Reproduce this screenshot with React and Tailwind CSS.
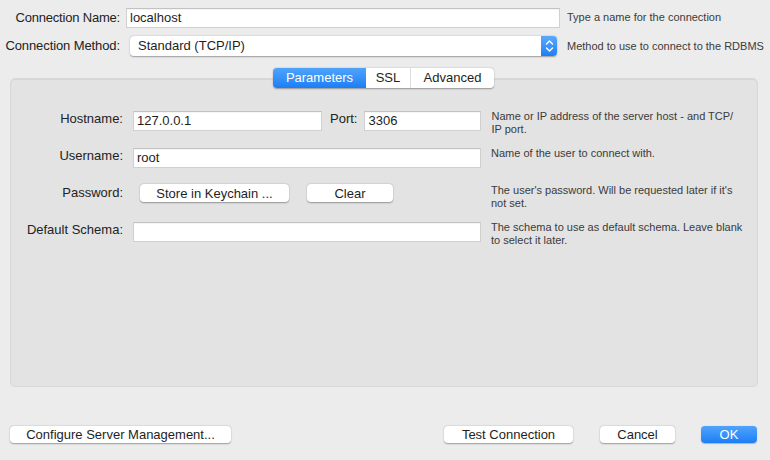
import React from "react";

function Input({ className = "", value = "" }) {
  return (
    <div
      className={
        "h-[20px] bg-white border border-[#d0d0d0] border-t-[#c2c2c2] shadow-[inset_0_1px_0_rgba(0,0,0,0.04)] flex items-center px-[3px] text-[13px] text-[#1e1e1e] " +
        className
      }
    >
      {value}
    </div>
  );
}

function Btn({ className = "", children }) {
  return (
    <div
      className={
        "bg-white rounded-[4px] shadow-[0_0.5px_1.5px_rgba(0,0,0,0.35)] flex items-center justify-center text-[13px] text-[#1e1e1e] leading-none " +
        className
      }
    >
      {children}
    </div>
  );
}

export default function App() {
  return (
    <div className="w-[770px] h-[460px] bg-[#ececec] flex flex-col font-['Liberation_Sans',Arial,sans-serif] text-[#222] overflow-hidden">
      {/* Connection name */}
      <div className="flex items-center h-[19px] mt-[8px]">
        <div className="w-[120px] text-right text-[13px] tracking-[-0.2px]">Connection Name:</div>
        <Input className="ml-[6px] w-[434px] h-[19px]" value="localhost" />
        <div className="ml-[7px] text-[11px] text-[#3b3b3b]">Type a name for the connection</div>
      </div>
      {/* Connection method */}
      <div className="flex items-center h-[20px] mt-[9px]">
        <div className="w-[120px] text-right text-[13px] tracking-[-0.1px]">Connection Method:</div>
        <div className="ml-[10px] w-[427px] h-[20px] bg-white rounded-[4px] shadow-[0_0.5px_1.5px_rgba(0,0,0,0.35)] flex items-center">
          <div className="flex-1 pl-[8px] text-[13px] text-[#1e1e1e]">Standard (TCP/IP)</div>
          <div className="w-[16px] h-[20px] rounded-r-[4px] bg-gradient-to-b from-[#5aa9fb] to-[#1b7ef6] flex items-center justify-center">
            <svg width="9" height="14" viewBox="0 0 9 14" fill="none" stroke="white" strokeWidth="1.4" strokeLinecap="round" strokeLinejoin="round">
              <path d="M1.5 5 L4.5 2 L7.5 5" />
              <path d="M1.5 9 L4.5 12 L7.5 9" />
            </svg>
          </div>
        </div>
        <div className="ml-[10px] text-[11px] text-[#3b3b3b]">Method to use to connect to the RDBMS</div>
      </div>

      {/* Tabs */}
      <div className="flex justify-center mt-[12px] relative z-10 pr-[3px]">
        <div className="flex h-[20px] rounded-[4px] bg-white shadow-[0_0.5px_1.5px_rgba(0,0,0,0.35)] text-[13px]">
          <div className="w-[93px] rounded-l-[4px] bg-gradient-to-b from-[#4fa3fb] to-[#1a7ef6] text-white flex items-center justify-center">Parameters</div>
          <div className="w-[45px] flex items-center justify-center text-[#1e1e1e] border-r border-[#dcdcdc]">SSL</div>
          <div className="w-[83px] flex items-center justify-center text-[#1e1e1e]">Advanced</div>
        </div>
      </div>

      {/* Panel */}
      <div className="ml-[10px] w-[748px] h-[309px] -mt-[10px] bg-[#e3e3e3] rounded-[5px] border border-[#d8d8d8] shadow-[inset_0_1px_1px_rgba(0,0,0,0.06)] pt-[32px] flex flex-col">
        {/* Hostname */}
        <div className="flex items-start h-[37px]">
          <div className="w-[112px] text-right text-[13px] leading-[15px]">Hostname:</div>
          <Input className="ml-[10px] w-[189px]" value="127.0.0.1" />
          <div className="ml-[8px] text-[13px] leading-[15px]">Port:</div>
          <Input className="ml-[7px] w-[117px]" value="3306" />
          <div className="ml-[10px] text-[11px] leading-[12.5px] text-[#3b3b3b] -mt-[1px]">
            Name or IP address of the server host - and TCP/<br />IP port.
          </div>
        </div>
        {/* Username */}
        <div className="flex items-start h-[37px]">
          <div className="w-[112px] text-right text-[13px] leading-[15px]">Username:</div>
          <Input className="ml-[10px] w-[348px] h-[19px]" value="root" />
          <div className="ml-[10px] text-[11px] leading-[12.5px] text-[#3b3b3b] -mt-[1px]">
            Name of the user to connect with.
          </div>
        </div>
        {/* Password */}
        <div className="flex items-start h-[37px]">
          <div className="w-[112px] text-right text-[13px] leading-[15px]">Password:</div>
          <Btn className="ml-[17px] w-[149px] h-[18px] -mt-[1px]">Store in Keychain ...</Btn>
          <Btn className="ml-[18px] w-[86px] h-[18px] -mt-[1px]">Clear</Btn>
          <div className="ml-[98px] text-[11px] leading-[12.5px] text-[#3b3b3b] -mt-[1px]">
            The user's password. Will be requested later if it's<br />not set.
          </div>
        </div>
        {/* Default schema */}
        <div className="flex items-start h-[37px]">
          <div className="w-[112px] text-right text-[13px] leading-[15px]">Default Schema:</div>
          <Input className="ml-[10px] w-[348px] h-[19px]" value="" />
          <div className="ml-[10px] text-[11px] leading-[13px] text-[#3b3b3b] -mt-[1px]">
            The schema to use as default schema. Leave blank<br />to select it later.
          </div>
        </div>
      </div>

      {/* Bottom buttons */}
      <div className="flex items-center h-[17px] mt-[39px]">
        <Btn className="ml-[10px] w-[221px] h-[17px]">Configure Server Management...</Btn>
        <Btn className="ml-[213px] w-[129px] h-[17px]">Test Connection</Btn>
        <Btn className="ml-[27px] w-[75px] h-[17px]">Cancel</Btn>
        <div className="ml-[26px] w-[56px] h-[17px] rounded-[4px] bg-gradient-to-b from-[#4fa3fb] to-[#1a7ef6] text-white text-[13px] flex items-center justify-center shadow-[0_0.5px_1px_rgba(0,0,0,0.25)]">
          OK
        </div>
      </div>
    </div>
  );
}
